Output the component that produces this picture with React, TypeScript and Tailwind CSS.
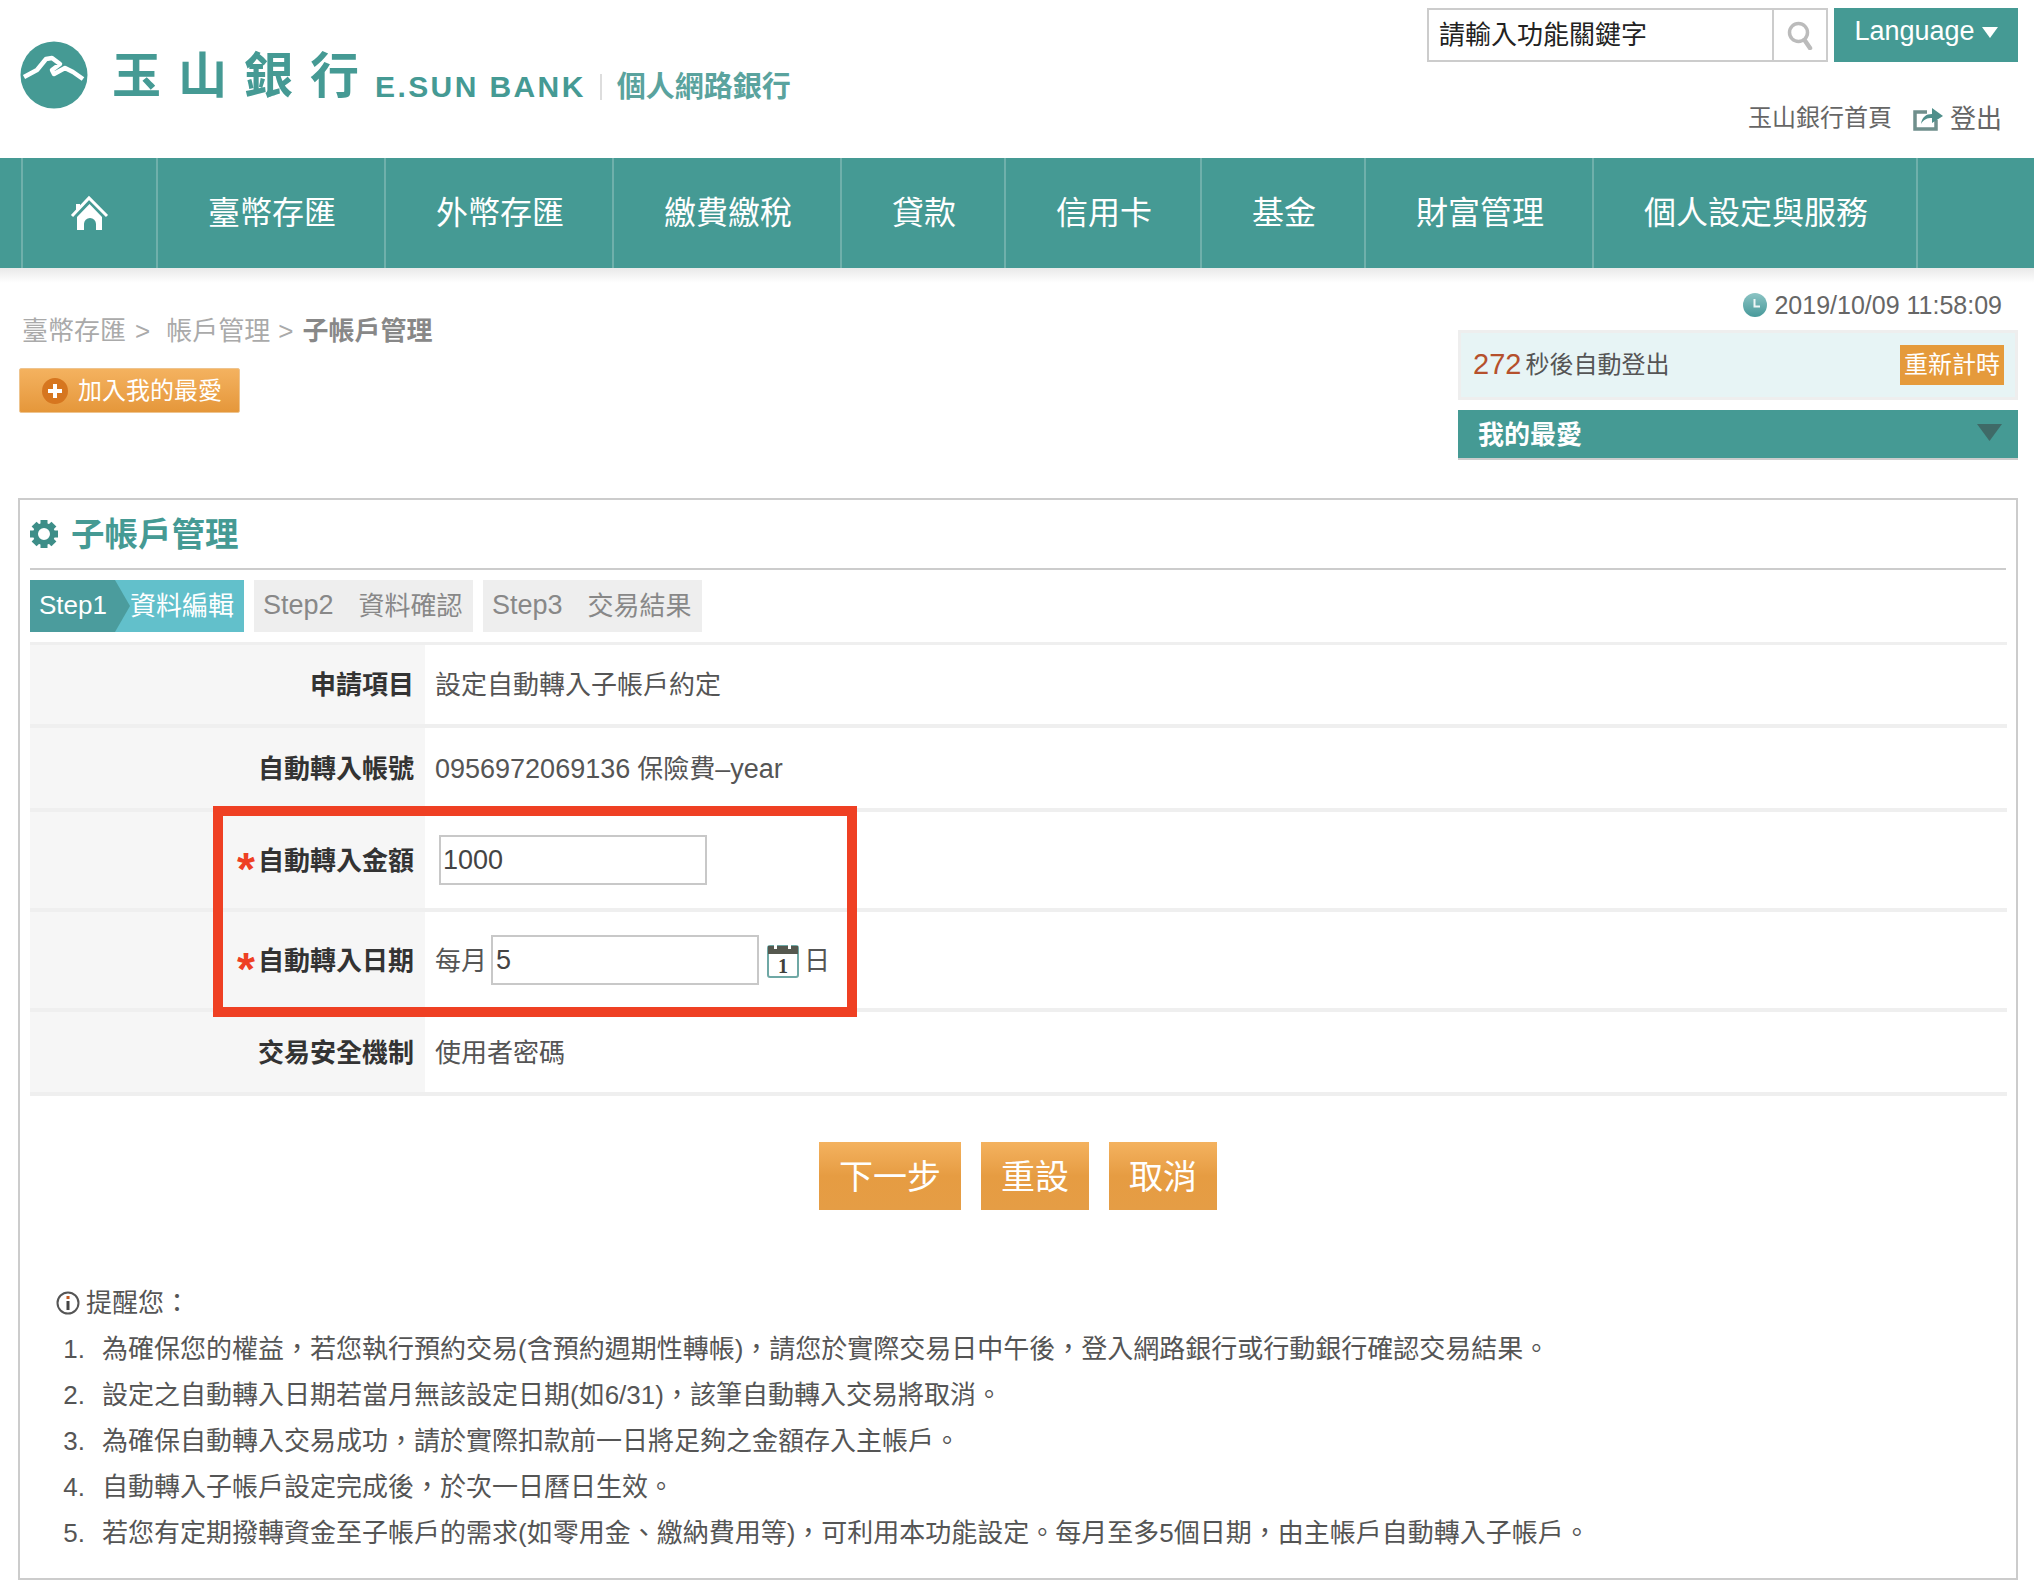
const navItems = ["臺幣存匯", "外幣存匯", "繳費繳稅", "貸款", "信用卡", "基金", "財富管理", "個人設定與服務"];

const notes = [
  "為確保您的權益，若您執行預約交易(含預約週期性轉帳)，請您於實際交易日中午後，登入網路銀行或行動銀行確認交易結果。",
  "設定之自動轉入日期若當月無該設定日期(如6/31)，該筆自動轉入交易將取消。",
  "為確保自動轉入交易成功，請於實際扣款前一日將足夠之金額存入主帳戶。",
  "自動轉入子帳戶設定完成後，於次一日曆日生效。",
  "若您有定期撥轉資金至子帳戶的需求(如零用金、繳納費用等)，可利用本功能設定。每月至多5個日期，由主帳戶自動轉入子帳戶。",
];

const navCell = "flex h-full items-center justify-center border-r-2 border-[#6fb0ab] pl-[50px] pr-[48px] text-[32px] text-white";
const labelCell = "flex items-center justify-end bg-[#f6f6f6] pr-[11px] pt-[2px] text-[26px] font-bold text-[#333]";
const valueCell = "flex items-center pl-[10px] pt-[2px] text-[26px] text-[#555]";
const rowLine = "col-span-2 h-[4px] bg-[#efefef]";
const inputBox = "mb-[3px] flex h-[50px] w-[268px] items-center border-2 border-[#c8c8c8] bg-white pt-[2px] text-[27px] text-[#444]";
const orangeBtn = "flex h-[68px] items-center justify-center bg-gradient-to-b from-[#f4b25f] via-[#e69c42] to-[#e59d45] pt-[2px] text-[34px] text-white";

function LogoMark() {
  return (
    <svg width="78" height="74" viewBox="0 0 78 74" className="shrink-0">
      <circle cx="39" cy="37" r="33.5" fill="#459a94" />
      <path
        d="M9 39 L22 32 L31 21 L37 20 L45 26 L37 32 L39 36 L50 30 L58 34 L68 41"
        fill="none"
        stroke="#fff"
        strokeWidth="4.5"
        strokeLinejoin="round"
      />
    </svg>
  );
}

function HomeIcon() {
  return (
    <svg width="60" height="50" viewBox="0 0 60 50">
      <path d="M12 28 L29 10 L47 28" fill="none" stroke="#fff" strokeWidth="3" />
      <path d="M16 23 V16 H20 V19 Z" fill="#fff" />
      <path
        fillRule="evenodd"
        d="M29.5 16 L42 29 V42 H36 V36 A6 6 0 0 0 24 36 V42 H17 V29 Z"
        fill="#fff"
      />
    </svg>
  );
}

function LogoutIcon() {
  return (
    <svg width="30" height="25" viewBox="0 0 30 25">
      <path d="M14 6 H2 V23 H23 V14" fill="none" stroke="#6f8f8c" strokeWidth="3.5" />
      <path d="M8 18 C9 11 13 8 19 8 V2 L30 10 L19 17 V12 C14 12 11 13 8 18 Z" fill="#4f8f8b" />
    </svg>
  );
}

function ClockIcon() {
  return (
    <svg width="24" height="24" viewBox="0 0 24 24">
      <defs>
        <linearGradient id="clockFill" x1="0" y1="0" x2="0" y2="1">
          <stop offset="0" stopColor="#8cc4c4" />
          <stop offset="1" stopColor="#47999a" />
        </linearGradient>
      </defs>
      <circle cx="12" cy="12" r="12" fill="url(#clockFill)" />
      <path d="M11.5 6 V13.5 H17" fill="none" stroke="#eef6f6" strokeWidth="2" />
    </svg>
  );
}

function CalendarIcon() {
  return (
    <svg width="32" height="34" viewBox="0 0 32 34">
      <rect x="1" y="2" width="30" height="31" rx="2" fill="#fff" stroke="#6fa8a5" strokeWidth="2" />
      <rect x="1" y="2" width="30" height="8" fill="#55584f" />
      <rect x="7" y="0" width="3" height="5" fill="#fff" />
      <rect x="21" y="0" width="3" height="5" fill="#fff" />
      <text x="16" y="29" textAnchor="middle" fontSize="20" fontWeight="700" fontFamily="Liberation Serif" fill="#3f423c">
        1
      </text>
    </svg>
  );
}

function InfoIcon() {
  return (
    <svg width="24" height="24" viewBox="0 0 24 24">
      <circle cx="12" cy="12" r="10.5" fill="#fff" stroke="#555" strokeWidth="2" />
      <rect x="10.5" y="5" width="3" height="3" fill="#c2571f" />
      <rect x="10.5" y="10" width="3" height="9" fill="#444" />
    </svg>
  );
}

function PlusIcon() {
  return (
    <svg width="26" height="26" viewBox="0 0 26 26">
      <circle cx="13" cy="13" r="13" fill="#d6761f" />
      <path d="M13 6 V20 M6 13 H20" stroke="#fff" strokeWidth="4" />
    </svg>
  );
}

function GearIcon() {
  const teeth = [0, 45, 90, 135, 180, 225, 270, 315];
  return (
    <svg width="28" height="28" viewBox="0 0 28 28" className="shrink-0">
      {teeth.map((deg) => (
        <rect key={deg} x="10.5" y="0" width="7" height="6" fill="#3d8e88" transform={`rotate(${deg} 14 14)`} />
      ))}
      <circle cx="14" cy="14" r="8.5" fill="none" stroke="#3d8e88" strokeWidth="5" />
    </svg>
  );
}

function SearchIcon() {
  return (
    <svg width="28" height="30" viewBox="0 0 28 30">
      <circle cx="12.5" cy="12.5" r="9" fill="none" stroke="#bbb" strokeWidth="3.5" />
      <path d="M18.5 20 L24 28" stroke="#bbb" strokeWidth="4.5" strokeLinecap="round" />
    </svg>
  );
}

export default function App() {
  return (
    <div className="relative h-[1594px] w-[2034px] overflow-hidden bg-white [font-family:'Liberation_Sans','Noto_Sans_CJK_TC',sans-serif]">
      <header className="flex h-[158px] justify-between">
        <div className="flex items-start pl-[15px] pt-[38px]">
          <LogoMark />
          <span className="ml-[19px] mt-[8px] text-[49px] leading-[60px] font-bold tracking-[17px] text-[#459a94]">玉山銀行</span>
          <span className="ml-[-1px] mt-[27px] text-[30px] leading-[44px] font-bold tracking-[2.4px] text-[#459a94]">E.SUN BANK</span>
          <span className="ml-[14px] mt-[36px] h-[26px] w-[2px] bg-[#ddd]" />
          <span className="ml-[15px] mt-[27px] text-[29px] leading-[44px] font-bold text-[#5aa39e]">個人網路銀行</span>
        </div>
        <div className="flex flex-col items-end pt-[8px] pr-[16px]">
          <div className="flex h-[54px] gap-[6px]">
            <div className="flex w-[401px] border-2 border-[#ccc]">
              <div className="flex flex-1 items-center pl-[10px] text-[26px] text-[#222]">請輸入功能關鍵字</div>
              <div className="flex w-[54px] items-center justify-center border-l-2 border-[#ccc]">
                <SearchIcon />
              </div>
            </div>
            <div className="flex w-[184px] items-start justify-center gap-[7px] bg-[#459a94] pt-[5px] text-[27px] leading-[36px] text-white">
              Language
              <svg width="16" height="12" viewBox="0 0 16 12" className="mt-[13px]">
                <path d="M0 1 H16 L8 12 Z" fill="#fff" />
              </svg>
            </div>
          </div>
          <div className="mt-[36px] flex h-[40px] items-center pr-[16px] text-[24px] text-[#666]">
            <span className="mr-[1px]">玉山銀行首頁</span>
            <span className="ml-[20px]"><LogoutIcon /></span>
            <span className="ml-[7px] mt-[2px] text-[26px]">登出</span>
          </div>
        </div>
      </header>

      <nav className="flex h-[110px] bg-[#459a94] pl-[21px]">
        <div className="flex h-full w-[137px] items-center justify-center border-x-2 border-[#6fb0ab]">
          <HomeIcon />
        </div>
        {navItems.map((item) => (
          <div key={item} className={navCell}>
            {item}
          </div>
        ))}
      </nav>
      <div className="h-[15px] bg-gradient-to-b from-[#e9e9e9] to-white" />

      <div className="flex h-[215px] justify-between pr-[16px]">
        <div className="pl-[19px] pt-[33px]">
          <div className="flex h-[30px] items-center text-[26px] text-[#aaa]">
            <span className="ml-[3px]">臺幣存匯</span>
            <span className="ml-[9px]">&gt;</span>
            <span className="ml-[16px]">帳戶管理</span>
            <span className="ml-[8px]">&gt;</span>
            <span className="ml-[9px] font-bold text-[#888]">子帳戶管理</span>
          </div>
          <div className="mt-[22px] flex h-[45px] w-[221px] items-center gap-[10px] rounded-[2px] border border-[#eec48f] bg-gradient-to-b from-[#f4b25f] to-[#e5973a] pl-[22px] text-[24px] text-white">
            <PlusIcon />
            <span>加入我的最愛</span>
          </div>
        </div>
        <div className="w-[560px] pt-[7px]">
          <div className="flex h-[30px] items-center justify-end gap-[7px] pr-[16px] text-[25px] text-[#666]">
            <ClockIcon />
            <span className="pt-[1px]">2019/10/09 11:58:09</span>
          </div>
          <div className="mt-[10px] flex h-[70px] items-center justify-between border-[3px] border-[#eeeeee] bg-[#e7f4f5] pl-[12px] pr-[11px]">
            <div className="flex items-center text-[24px] text-[#555]">
              <span className="mr-[4px] mb-[1px] text-[29px] text-[#b5502c]">272</span>
              秒後自動登出
            </div>
            <div className="flex h-[40px] w-[104px] items-center justify-center bg-[#e59a3b] text-[24px] text-white">重新計時</div>
          </div>
          <div className="mt-[10px] flex h-[50px] items-center justify-between border-b-2 border-[#ccc] bg-[#459a94] pl-[20px] pr-[16px]">
            <span className="pt-[2px] text-[26px] font-bold text-white">我的最愛</span>
            <svg width="25" height="17" viewBox="0 0 25 17" className="mb-[4px]">
              <path d="M0 0 H25 L12.5 17 Z" fill="#3f6a67" />
            </svg>
          </div>
        </div>
      </div>

      <main className="ml-[18px] h-[1082px] w-[2000px] border-2 border-[#ccc] px-[10px]">
        <div className="flex h-[68px] items-center gap-[13px]">
          <GearIcon />
          <h1 className="pt-[3px] text-[33.5px] font-bold text-[#459a94]">子帳戶管理</h1>
        </div>
        <div className="h-[2px] bg-[#ccc]" />

        <div className="mt-[10px] flex h-[52px] gap-[10px] text-[26px]">
          <div className="flex w-[214px] bg-[#62c0cb] text-white">
            <div className="flex w-[100px] items-center bg-[#4b9c9d] pb-[2px] pl-[9px] [clip-path:polygon(0_0,85px_0,100px_50%,85px_100%,0_100%)]">Step1</div>
            <div className="flex items-center">資料編輯</div>
          </div>
          <div className="flex w-[219px] items-center gap-[25px] bg-[#eee] px-[9px] text-[#888]">
            <span className="pb-[2px] text-[27px]">Step2</span>
            <span>資料確認</span>
          </div>
          <div className="flex w-[219px] items-center gap-[25px] bg-[#eee] px-[9px] text-[#888]">
            <span className="pb-[2px] text-[27px]">Step3</span>
            <span>交易結果</span>
          </div>
        </div>

        <div className="mt-[10px] grid w-[1977px] grid-cols-[395px_1fr] border-t-[3px] border-[#efefef]">
          <div className={`${labelCell} h-[79px]`}>申請項目</div>
          <div className={valueCell}>設定自動轉入子帳戶約定</div>
          <div className={rowLine} />
          <div className={`${labelCell} h-[80px]`}>自動轉入帳號</div>
          <div className={valueCell}>
            <span className="text-[27px]">0956972069136</span>
            <span className="ml-[7px]">保險費</span>
            <span className="text-[27px]">–year</span>
          </div>
          <div className={rowLine} />
          <div className={`${labelCell} h-[96px]`}>
            <span className="mr-[3px] mt-[16px] text-[46px] leading-[30px] font-bold text-[#ee4023]">*</span>
            自動轉入金額
          </div>
          <div className={`${valueCell} pl-[14px]`}>
            <div className={`${inputBox} pl-[2px]`}>1000</div>
          </div>
          <div className={rowLine} />
          <div className={`${labelCell} h-[96px]`}>
            <span className="mr-[3px] mt-[16px] text-[46px] leading-[30px] font-bold text-[#ee4023]">*</span>
            自動轉入日期
          </div>
          <div className={valueCell}>
            <span>每月</span>
            <div className={`${inputBox} ml-[4px] pl-[3px]`}>5</div>
            <span className="ml-[8px]"><CalendarIcon /></span>
            <span className="ml-[5px]">日</span>
          </div>
          <div className={rowLine} />
          <div className={`${labelCell} h-[80px]`}>交易安全機制</div>
          <div className={valueCell}>使用者密碼</div>
          <div className={rowLine} />
        </div>

        <div className="mt-[46px] flex justify-center gap-[20px]">
          <div className={`${orangeBtn} w-[142px]`}>下一步</div>
          <div className={`${orangeBtn} w-[108px]`}>重設</div>
          <div className={`${orangeBtn} w-[108px]`}>取消</div>
        </div>

        <div className="mt-[70px] text-[26px] text-[#555]">
          <div className="flex h-[46px] items-center gap-[6px] pl-[26px]">
            <InfoIcon />
            <span>提醒您：</span>
          </div>
          <ol>
            {notes.map((note, i) => (
              <li key={i} className="flex h-[46px] items-center">
                <span className="w-[55px] text-right">{i + 1}.</span>
                <span className="ml-[17px]">{note}</span>
              </li>
            ))}
          </ol>
        </div>
      </main>

      {/* 圖上的紅框標註 */}
      <div className="absolute left-[213px] top-[806px] h-[211px] w-[644px] border-[10px] border-[#ef4023]" />
    </div>
  );
}
